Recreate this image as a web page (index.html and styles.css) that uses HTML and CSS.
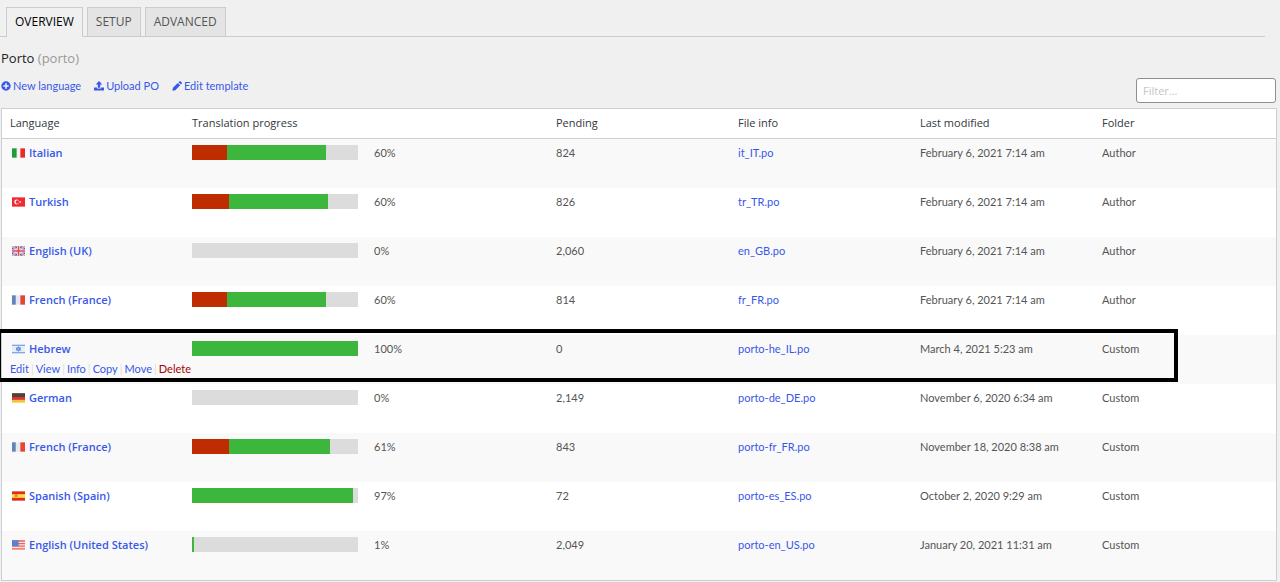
FILE: index.html
```html
<!DOCTYPE html>
<html lang="en">
<head>
    <meta charset="UTF-8">
    <meta name="viewport" content="width=device-width, initial-scale=1.0">
    <title>Porto translations</title>
    <link rel="stylesheet" href="styles.css">
</head>
<body>
    <svg class="defs" aria-hidden="true">
        <symbol id="flag-it" viewBox="0 0 14 10">
            <rect width="14" height="10" fill="#f4f4f2"/>
            <rect width="5" height="10" fill="#1f9a3c"/>
            <rect x="9" width="5" height="10" fill="#ea2a2a"/>
        </symbol>
        <symbol id="flag-tr" viewBox="0 0 14 10">
            <rect width="14" height="10" fill="#f02a30"/>
            <circle cx="5" cy="5" r="2.6" fill="#fff"/>
            <circle cx="5.8" cy="5" r="1.9" fill="#f02a30"/>
            <path d="M7 5l3-1.4-1 1.4 1 1.4z" fill="#fff"/>
        </symbol>
        <symbol id="flag-gb" viewBox="0 0 14 10">
            <rect width="14" height="10" fill="#4a5fae"/>
            <path d="M0 0l14 10M14 0L0 10" stroke="#f0e6ee" stroke-width="2.2"/>
            <path d="M0 0l14 10M14 0L0 10" stroke="#dc5868" stroke-width="0.8"/>
            <path d="M7 0v10M0 5h14" stroke="#fff" stroke-width="3.4"/>
            <path d="M7 0v10M0 5h14" stroke="#e04450" stroke-width="1.8"/>
        </symbol>
        <symbol id="flag-fr" viewBox="0 0 14 10">
            <rect width="14" height="10" fill="#e6e9f0"/>
            <rect width="4" height="10" fill="#6482bc"/>
            <rect x="9" width="5" height="10" fill="#e84436"/>
        </symbol>
        <symbol id="flag-il" viewBox="0 0 14 10">
            <rect width="14" height="10" fill="#e4edfa"/>
            <path d="M0 1h14M0 9h14" stroke="#81a7e6" stroke-width="1.4"/>
            <path d="M7 2.4l2.4 3.8H4.600zM7 7.600L4.600 3.800h4.800z" fill="#a9c4f2" stroke="#6088dc" stroke-width="0.9"/>
        </symbol>
        <symbol id="flag-de" viewBox="0 0 14 10">
            <rect width="14" height="10" fill="#f5c33b"/>
            <rect width="14" height="7" fill="#e2362c"/>
            <rect width="14" height="4" fill="#4a4340"/>
        </symbol>
        <symbol id="flag-es" viewBox="0 0 14 10">
            <rect width="14" height="10" fill="#e8281e"/>
            <rect y="3" width="14" height="4" fill="#fbe03c"/>
            <rect x="3" y="3" width="3" height="3" fill="#d98a40"/>
        </symbol>
        <symbol id="flag-us" viewBox="0 0 14 10">
            <rect width="14" height="10" fill="#fbe4e4"/>
            <path d="M0 .7h14M0 3.5h14M0 6.3h14M0 9.2h14" stroke="#e8605c" stroke-width="1.4"/>
            <rect width="7" height="6" fill="#4a78d0"/>
            <path d="M1 1.5h5M1 4h5" stroke="#a9c3f0" stroke-width="0.7" stroke-dasharray="1 1"/>
        </symbol>
    </svg>

    <nav class="tabs">
        <a class="tab active" href="#overview">OVERVIEW</a>
        <a class="tab" href="#setup">SETUP</a>
        <a class="tab" href="#advanced">ADVANCED</a>
    </nav>

    <main class="panel">
        <h1>Porto <span>(porto)</span></h1>
        <div class="toolbar">
            <div class="actions">
                <a href="#new">
                    <svg class="icon" viewBox="0 0 10 10"><path fill-rule="evenodd" fill="currentColor" d="M5 .3a4.7 4.7 0 1 0 0 9.4A4.7 4.7 0 0 0 5 .3zM4.2 2.3h1.6v1.9h1.9v1.6H5.8v1.9H4.2V5.8H2.3V4.2h1.9z"/></svg>
                    New language
                </a>
                <a href="#upload">
                    <svg class="icon" viewBox="0 0 10 10"><path fill="currentColor" d="M5 0l3.3 3.5H6.2v3.2H3.8V3.5H1.7zM0 6.5h3v1h4v-1h3v3H0z"/></svg>
                    Upload PO
                </a>
                <a href="#template">
                    <svg class="icon" viewBox="0 0 10 10"><path fill="currentColor" d="M.4 9.7l.5-2.9 4.9-4.9 2.4 2.4-4.9 4.9zM6.5 1.2L7.4.4c.4-.4.8-.4 1.2 0l1.1 1.1c.4.4.4.8 0 1.2l-.8.9z"/></svg>
                    Edit template
                </a>
            </div>
            <input class="filter" type="text" placeholder="Filter..." aria-label="Filter">
        </div>

        <table class="list">
            <thead>
                <tr>
                    <th>Language</th>
                    <th colspan="2">Translation progress</th>
                    <th>Pending</th>
                    <th>File info</th>
                    <th>Last modified</th>
                    <th>Folder</th>
                </tr>
            </thead>
            <tbody>
                <tr>
                    <td><a class="lang" href="#it"><svg class="flag"><use href="#flag-it"/></svg>Italian</a></td>
                    <td><div class="bar"><span class="fuzzy" style="width: 21%"></span><span class="done" style="width: 60%"></span></div></td>
                    <td>60%</td>
                    <td>824</td>
                    <td><a href="#it-po">it_IT.po</a></td>
                    <td>February 6, 2021 7:14 am</td>
                    <td>Author</td>
                </tr>
                <tr>
                    <td><a class="lang" href="#tr"><svg class="flag"><use href="#flag-tr"/></svg>Turkish</a></td>
                    <td><div class="bar"><span class="fuzzy" style="width: 22%"></span><span class="done" style="width: 60%"></span></div></td>
                    <td>60%</td>
                    <td>826</td>
                    <td><a href="#tr-po">tr_TR.po</a></td>
                    <td>February 6, 2021 7:14 am</td>
                    <td>Author</td>
                </tr>
                <tr>
                    <td><a class="lang" href="#gb"><svg class="flag"><use href="#flag-gb"/></svg>English (UK)</a></td>
                    <td><div class="bar"></div></td>
                    <td>0%</td>
                    <td>2,060</td>
                    <td><a href="#gb-po">en_GB.po</a></td>
                    <td>February 6, 2021 7:14 am</td>
                    <td>Author</td>
                </tr>
                <tr>
                    <td><a class="lang" href="#fr"><svg class="flag"><use href="#flag-fr"/></svg>French (France)</a></td>
                    <td><div class="bar"><span class="fuzzy" style="width: 21%"></span><span class="done" style="width: 60%"></span></div></td>
                    <td>60%</td>
                    <td>814</td>
                    <td><a href="#fr-po">fr_FR.po</a></td>
                    <td>February 6, 2021 7:14 am</td>
                    <td>Author</td>
                </tr>
                <tr class="marked">
                    <td>
                        <a class="lang" href="#he"><svg class="flag"><use href="#flag-il"/></svg>Hebrew</a>
                        <div class="row-actions">
                            <a href="#edit">Edit</a><i>|</i><a href="#view">View</a><i>|</i><a href="#info">Info</a><i>|</i><a href="#copy">Copy</a><i>|</i><a href="#move">Move</a><i>|</i><a class="delete" href="#delete">Delete</a>
                        </div>
                    </td>
                    <td><div class="bar"><span class="done" style="width: 100%"></span></div></td>
                    <td>100%</td>
                    <td>0</td>
                    <td><a href="#he-po">porto-he_IL.po</a></td>
                    <td>March 4, 2021 5:23 am</td>
                    <td>Custom</td>
                </tr>
                <tr>
                    <td><a class="lang" href="#de"><svg class="flag"><use href="#flag-de"/></svg>German</a></td>
                    <td><div class="bar"></div></td>
                    <td>0%</td>
                    <td>2,149</td>
                    <td><a href="#de-po">porto-de_DE.po</a></td>
                    <td>November 6, 2020 6:34 am</td>
                    <td>Custom</td>
                </tr>
                <tr>
                    <td><a class="lang" href="#fr-custom"><svg class="flag"><use href="#flag-fr"/></svg>French (France)</a></td>
                    <td><div class="bar"><span class="fuzzy" style="width: 22%"></span><span class="done" style="width: 61%"></span></div></td>
                    <td>61%</td>
                    <td>843</td>
                    <td><a href="#fr-custom-po">porto-fr_FR.po</a></td>
                    <td>November 18, 2020 8:38 am</td>
                    <td>Custom</td>
                </tr>
                <tr>
                    <td><a class="lang" href="#es"><svg class="flag"><use href="#flag-es"/></svg>Spanish (Spain)</a></td>
                    <td><div class="bar"><span class="done" style="width: 97%"></span></div></td>
                    <td>97%</td>
                    <td>72</td>
                    <td><a href="#es-po">porto-es_ES.po</a></td>
                    <td>October 2, 2020 9:29 am</td>
                    <td>Custom</td>
                </tr>
                <tr>
                    <td><a class="lang" href="#us"><svg class="flag"><use href="#flag-us"/></svg>English (United States)</a></td>
                    <td><div class="bar"><span class="done" style="width: 1%"></span></div></td>
                    <td>1%</td>
                    <td>2,049</td>
                    <td><a href="#us-po">porto-en_US.po</a></td>
                    <td>January 20, 2021 11:31 am</td>
                    <td>Custom</td>
                </tr>
            </tbody>
        </table>
    </main>
</body>
</html>
```
FILE: styles.css
```css
*,
*::after {
    box-sizing: border-box;
}

body {
    margin: 0;
    background-color: #f0f0f0;
    font-family: "Open Sans", "Noto Sans", sans-serif;
    font-size: 11px;
    line-height: 16px;
    color: #555;
}

a {
    color: #3858e9;
    text-decoration: none;
}

a:hover {
    text-decoration: underline;
}

.defs {
    display: none;
}

.tabs {
    display: flex;
    gap: 4px;
    margin-right: 15px;
    padding: 7px 6px 0;
    border-bottom: 1px solid #ccc;
}

.tab {
    padding: 6px 8px;
    border: 1px solid #ccc;
    border-bottom: none;
    background-color: #e4e4e4;
    color: #555;
    font-size: 12px;
}

.tab.active {
    margin-bottom: -1px;
    background-color: #f0f0f0;
    color: #000;
}

.panel {
    padding: 13px 3px 0 1px;
}

h1 {
    margin: 0;
    font-size: 13px;
    font-weight: 400;
    line-height: 16px;
    color: #222;
}

h1 span {
    color: #999;
}

.toolbar {
    display: flex;
    justify-content: space-between;
    align-items: flex-start;
    padding: 12px 1px 5px 0;
}

.actions {
    display: flex;
    gap: 13px;
    font-family: Lato, sans-serif;
}

.actions a {
    display: flex;
    align-items: center;
    gap: 2px;
}

.icon {
    width: 10px;
    height: 10px;
}

.filter {
    width: 140px;
    height: 25px;
    padding: 0 6px;
    border: 1px solid #8c8f94;
    border-radius: 3px;
    background-color: #fff;
    font: inherit;
    color: #333;
}

.filter::placeholder {
    color: #c3c4c7;
}

.list {
    width: 100%;
    border: 1px solid #ccd0d4;
    border-collapse: separate;
    border-spacing: 0;
    table-layout: fixed;
    background-color: #fff;
}

.list th,
.list td {
    padding: 6px 8px;
    text-align: left;
    vertical-align: top;
}

.list th {
    padding-bottom: 7px;
    border-bottom: 1px solid #ccd0d4;
    font-weight: 400;
    color: #32373c;
}

.list td {
    height: 49px;
    font-family: Lato, sans-serif;
}

.list tbody tr:nth-child(odd) {
    background-color: #f9f9f9;
}

.lang {
    display: flex;
    align-items: center;
    gap: 4px;
    padding-left: 2px;
    font-family: "Open Sans", "Noto Sans", sans-serif;
    font-weight: 600;
}

.flag {
    width: 13px;
    height: 10px;
}

.bar {
    display: flex;
    height: 15px;
    background-color: #dcdcdc;
}

.fuzzy {
    background-color: #be2c00;
}

.done {
    background-color: #3db63d;
}

.row-actions {
    display: flex;
    gap: 2px;
    padding-top: 4px;
    line-height: 15px;
    white-space: nowrap;
}

.row-actions i {
    font-style: normal;
    color: #ddd;
}

.row-actions .delete {
    color: #a00;
}

.marked {
    position: relative;
}

/* thick frame round the highlighted row, lies over the cells */
.marked td:first-child::after {
    content: "";
    position: absolute;
    top: -6px;
    right: 98px;
    left: -5px;
    height: 53px;
    border: 4px solid #000;
    pointer-events: none;
}
```
